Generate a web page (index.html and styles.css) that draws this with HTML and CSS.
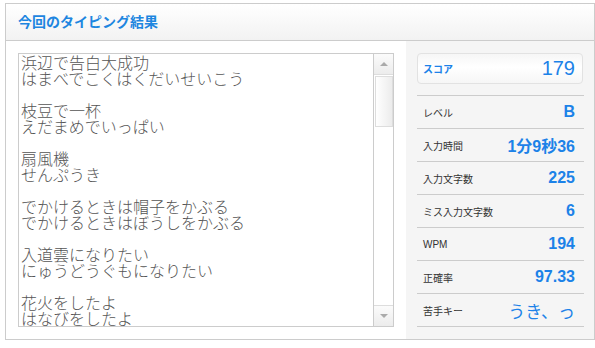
FILE: index.html
```html
<!DOCTYPE html>
<html lang="ja">
<head>
  <meta charset="UTF-8" />
  <meta name="viewport" content="width=device-width, initial-scale=1.0"/>
  <title>タイピング結果</title>
  <link rel="stylesheet" href="styles.css">
</head>
<body>

  <div class="result">
    <div class="result-head">
      <h2>今回のタイピング結果</h2>
    </div>

    <div class="result-body">
      <div class="memo-wrap">
        <div class="memo">
          <div class="memo-text">浜辺で告白大成功
はまべでこくはくだいせいこう

枝豆で一杯
えだまめでいっぱい

扇風機
せんぷうき

でかけるときは帽子をかぶる
でかけるときはぼうしをかぶる

入道雲になりたい
にゅうどうぐもになりたい

花火をしたよ
はなびをしたよ</div>
          <div class="scrollbar">
            <div class="sb-btn sb-up"><span class="arrow-up"></span></div>
            <div class="sb-track"><div class="sb-thumb"></div></div>
            <div class="sb-btn sb-down"><span class="arrow-down"></span></div>
          </div>
        </div>
      </div>

      <div class="stats">
        <div class="score">
          <span class="score-label">スコア</span>
          <span class="score-value">179</span>
        </div>
        <ul class="stat-list">
          <li><span class="label">レベル</span><span class="value">B</span></li>
          <li><span class="label">入力時間</span><span class="value">1分9秒36</span></li>
          <li><span class="label">入力文字数</span><span class="value">225</span></li>
          <li><span class="label">ミス入力文字数</span><span class="value">6</span></li>
          <li><span class="label">WPM</span><span class="value">194</span></li>
          <li><span class="label">正確率</span><span class="value">97.33</span></li>
          <li><span class="label">苦手キー</span><span class="value keys">うき、っ</span></li>
        </ul>
      </div>
    </div>
  </div>

</body>
</html>
```

FILE: styles.css
```css
body {
  margin: 3px 0 0 5px;
  font-family: "Noto Sans CJK JP", sans-serif;
  color: #333;
}
.result {
  width: 588px;
  border: 1px solid #ccc;
}
.result-head {
  height: 36px;
  padding: 0 12px;
  display: flex;
  align-items: center;
  border-bottom: 1px solid #ccc;
  background: linear-gradient(#fff, #f2f2f2);
}
.result-head h2 {
  margin: 0 0 3px;
  font-size: 14px;
  line-height: 20px;
  color: #1e86e0;
}
.result-body {
  display: flex;
  height: 298px;
}
.memo-wrap {
  padding: 12px;
  background: white;
}
.memo {
  width: 374px;
  height: 272px;
  border: 1px solid #ccc;
  display: flex;
}
.memo-text {
  flex: 1;
  overflow: hidden;
  padding: 0 2px;
  font-size: 16px;
  line-height: 16px;
  font-weight: 300;
  color: #555;
  white-space: pre-line;
}
.scrollbar {
  width: 19px;
  border-left: 1px solid #ccc;
  display: flex;
  flex-direction: column;
}
.sb-btn {
  height: 20px;
  display: flex;
  align-items: center;
  justify-content: center;
  background: linear-gradient(#fbfbfb, #ececec);
}
.sb-up {
  border-bottom: 1px solid #ddd;
}
.sb-down {
  border-top: 1px solid #ddd;
}
.arrow-up, .arrow-down {
  width: 0;
  height: 0;
  border-left: 4px solid transparent;
  border-right: 4px solid transparent;
}
.arrow-up {
  border-bottom: 4px solid #aaa;
}
.arrow-down {
  border-top: 4px solid #aaa;
}
.sb-track {
  flex: 1;
  padding: 1px 0 0 1px;
}
.sb-thumb {
  width: 16px;
  height: 49px;
  border: 1px solid #ddd;
  background: linear-gradient(to right, #fff, #ececec);
}
.stats {
  width: 167px;
  padding: 12px 10px 0 11px;
  background: #f5f5f5;
}
.score {
  height: 29px;
  margin-right: 1px;
  padding: 0 7px 0 5px;
  display: flex;
  justify-content: space-between;
  align-items: center;
  border: 1px solid #e2e2e2;
  border-radius: 4px;
  background: linear-gradient(#f6f6f6, #fff 45%, #f6f6f6);
}
.score-label {
  font-size: 10px;
  font-weight: bold;
  color: #1c82e8;
}
.score-value {
  font-family: "Liberation Sans", sans-serif;
  font-size: 20px;
  color: #1c82e8;
}
.stat-list {
  margin: 11px 0 0;
  padding: 0;
  list-style: none;
  border-bottom: 1px solid #ccc;
}
.stat-list li {
  height: 32px;
  padding: 0 9px 0 6px;
  display: flex;
  justify-content: space-between;
  align-items: center;
  border-top: 1px solid #ccc;
}
.label {
  font-family: "Liberation Sans", "Noto Sans CJK JP", sans-serif;
  font-size: 10px;
  color: #333;
}
.value {
  font-family: "Liberation Sans", "Noto Sans CJK JP", sans-serif;
  font-size: 16px;
  font-weight: bold;
  color: #1c82e8;
}
.value.keys {
  font-family: "Noto Sans CJK JP", sans-serif;
  font-size: 17px;
  font-weight: normal;
}
```
